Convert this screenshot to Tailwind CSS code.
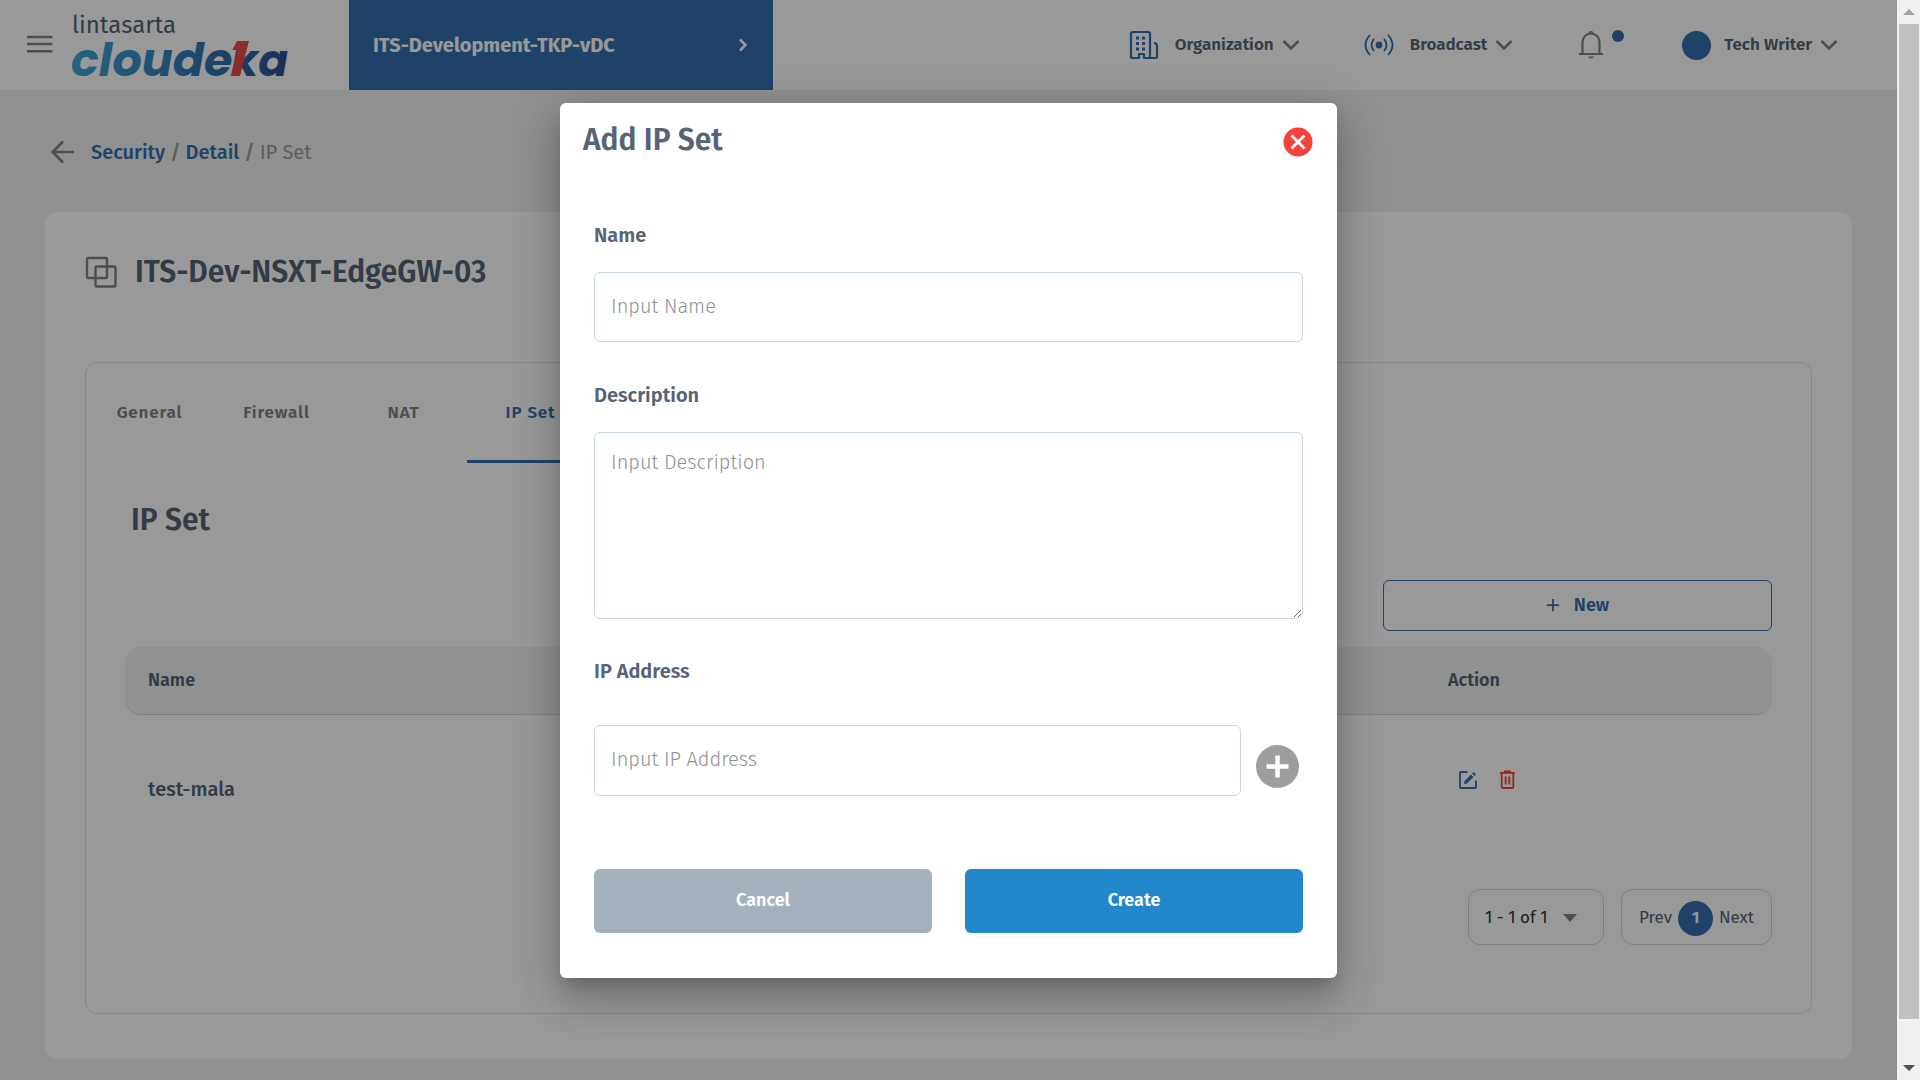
<!DOCTYPE html>
<html lang="en">
<head>
  <meta charset="UTF-8">
  <title>Add IP Set</title>
  <script src="https://cdn.jsdelivr.net/npm/@tailwindcss/browser@4"></script>
</head>
<body class="flex h-screen overflow-hidden bg-[#f0f0f0] font-['Fira_Sans','Noto_Sans',sans-serif] text-[#566476]">

  <div class="relative flex-1 min-w-0 overflow-hidden">

    <!-- Top bar -->
    <header class="flex items-center h-[90px] bg-white">
      <button aria-label="Menu" class="ml-6 w-8 h-8 text-[#828282]">
        <svg viewBox="0 0 32 32" class="w-8 h-8" stroke="currentColor" stroke-width="2.500"><path d="M3 8h25.500M3 15h25.500M3 22.300h25.500"/></svg>
      </button>
      <a href="#" aria-label="Lintasarta Cloudeka" class="ml-[17px] w-[214px]">
        <svg viewBox="0 0 214 90" class="w-[214px] h-[90px] overflow-visible">
          <defs>
            <linearGradient id="logoFill" gradientUnits="userSpaceOnUse" x1="0" y1="0" x2="212" y2="0">
              <stop offset="0" stop-color="#40a5d6"/>
              <stop offset=".3" stop-color="#378fc4"/>
              <stop offset=".7" stop-color="#3270ab"/>
              <stop offset="1" stop-color="#2c5094"/>
            </linearGradient>
          </defs>
          <text x="-1" y="33" font-size="24" fill="#566476" font-family="Fira Sans, Noto Sans">lintasarta</text>
          <text x="-2" y="76" font-size="46" font-weight="700" font-style="italic" fill="url(#logoFill)" font-family="Poppins, Montserrat, Open Sans">cloude</text>
          <text x="158" y="76" font-size="44" font-weight="700" font-style="italic" fill="url(#logoFill)" font-family="Poppins, Montserrat, Open Sans">ka</text>
          <path d="M157.700 76 164.700 50H159.300L164 41H176L167 76Z" fill="#ea4a48"/>
        </svg>
      </a>
      <button class="ml-[62px] flex items-center justify-between w-[424px] h-full pl-6 pr-6 bg-[#3570ad] text-white text-xl font-bold">
        ITS-Development-TKP-vDC
        <svg viewBox="0 0 12 16" class="w-3 h-4" fill="none" stroke="currentColor" stroke-width="2.500"><path d="M3 2.500 8.500 8 3 13.500"/></svg>
      </button>

      <nav class="ml-auto mr-[59px] flex items-center text-[17px] font-semibold">
        <button class="flex items-center">
          <svg viewBox="0 0 30 30" class="w-[30px] h-[30px] mr-4 text-[#3570ad]" fill="none" stroke="currentColor" stroke-width="2.200" stroke-linejoin="round">
            <path d="M2 28V4a2 2 0 0 1 2-2h15a2 2 0 0 1 2 2v24h-6v-4h-5v4H4a2 2 0 0 1-2-1M21 28h6a1 1 0 0 0 1-1V16q0-3-3-3"/>
            <path d="M7 8h3M13 8h3M7 13.500h3M13 13.500h3M7 19h3M13 19h3" stroke-width="3"/>
          </svg>
          Organization
          <svg viewBox="0 0 18 12" class="w-[18px] h-3 ml-2 text-[#828282]" fill="none" stroke="currentColor" stroke-width="2.500"><path d="m1.500 2 7.500 7.500L16.500 2"/></svg>
        </button>
        <button class="flex items-center ml-16">
          <svg viewBox="0 0 30 22" class="w-[30px] h-[22px] mr-4 text-[#3570ad]" fill="none" stroke="currentColor" stroke-width="1.800" stroke-linecap="round">
            <circle cx="15" cy="11" r="3.400" fill="currentColor" stroke="none"/>
            <path d="M9.500 5.500q-4 5.500 0 11M20.500 5.500q4 5.500 0 11M5.500 1.500q-8 9.500 0 19M24.500 1.500q8 9.500 0 19"/>
          </svg>
          Broadcast
          <svg viewBox="0 0 18 12" class="w-[18px] h-3 ml-2 text-[#828282]" fill="none" stroke="currentColor" stroke-width="2.500"><path d="m1.500 2 7.500 7.500L16.500 2"/></svg>
        </button>
        <button aria-label="Notifications" class="flex items-start ml-[65px]">
          <svg viewBox="0 0 26 30" class="w-[26px] h-[30px] text-[#828282]" fill="none" stroke="currentColor" stroke-width="2.200">
            <path d="M1 24h24M4.500 23V12a8.500 8.500 0 0 1 17 0v11"/>
            <path d="M10.500 3.500a2.500 2.500 0 0 1 5 0ZM10 26.500h6q-1 2-3 2t-3-2" fill="currentColor" stroke="none"/>
          </svg>
          <span class="w-3 h-3 ml-2 rounded-full bg-[#3570ad]"></span>
        </button>
        <button class="flex items-center ml-[58px]">
          <span class="w-[29px] h-[29px] mr-[13px] rounded-full bg-[#3570ad]"></span>
          Tech Writer
          <svg viewBox="0 0 18 12" class="w-[18px] h-3 ml-2 text-[#828282]" fill="none" stroke="currentColor" stroke-width="2.500"><path d="m1.500 2 7.500 7.500L16.500 2"/></svg>
        </button>
      </nav>
    </header>

    <main class="px-[45px] pt-12">
      <!-- Breadcrumb -->
      <nav class="flex items-center h-7 pl-1 text-xl font-medium text-[#3570ad]">
        <a href="#" aria-label="Back" class="mr-4 text-[#828282]">
          <svg viewBox="0 0 26 26" class="w-[26px] h-[26px]" fill="none" stroke="currentColor" stroke-width="2.500"><path d="M25 13H4M14 2.500 3.500 13 14 23.500"/></svg>
        </a>
        <a href="#">Security</a>
        <span class="mx-[5px] text-[#999]">/</span>
        <a href="#">Detail</a>
        <span class="mx-[5px] text-[#999]">/</span>
        <span class="font-normal text-[#999]">IP Set</span>
      </nav>

      <section class="mt-[46px] px-10 pt-10 pb-[45px] rounded-xl bg-white">
        <div class="flex items-center gap-[18px] h-10">
          <svg viewBox="0 0 32 32" class="w-8 h-8 text-[#828282]" fill="none" stroke="currentColor" stroke-width="2.400">
            <rect x="2" y="2" width="20" height="20" rx="1"/><rect x="10.500" y="10.500" width="20" height="20" rx="1"/>
          </svg>
          <h1 class="text-3xl font-semibold">ITS-Dev-NSXT-EdgeGW-03</h1>
        </div>

        <div class="mt-[70px] border border-[#dcdfe2] rounded-xl pb-[68px]">
          <!-- Tabs -->
          <div class="flex h-[100px] text-[17px] font-semibold tracking-wider text-[#828282]">
            <button class="w-[127px]">General</button>
            <button class="w-[127px]">Firewall</button>
            <button class="w-[127px]">NAT</button>
            <button class="w-[127px] border-y-3 border-t-transparent border-b-[#3570ad] text-[#3570ad]">IP Set</button>
          </div>

          <div class="px-[39px]">
            <h2 class="mt-[37px] pl-1.5 text-3xl leading-10 font-semibold">IP Set</h2>
            <div class="flex justify-end mt-10">
              <button class="flex items-center justify-center gap-3.5 w-[389px] h-[51px] pb-0.5 border border-[#3570ad] rounded-md text-lg font-semibold text-[#3570ad]">
                <svg viewBox="0 0 16 16" class="w-3.5 h-3.5" stroke="currentColor" stroke-width="2"><path d="M8 1v14M1 8h14"/></svg>
                New
              </button>
            </div>

            <table class="mt-4 w-full text-left border-separate border-spacing-0">
              <thead>
                <tr class="h-[68px] text-lg">
                  <th class="pl-[23px] pb-0.5 font-semibold bg-[#f0f4f2] border-b border-[#d6d6d6] rounded-l-2xl">Name</th>
                  <th class="w-[324px] pb-0.5 font-semibold bg-[#f0f4f2] border-b border-[#d6d6d6] rounded-r-2xl">Action</th>
                </tr>
              </thead>
              <tbody>
                <tr class="h-[148px]">
                  <td class="pl-[23px] text-xl font-medium">test-mala</td>
                  <td>
                    <div class="flex gap-5 pl-2.5 pb-[18px]">
                      <button aria-label="Edit">
                        <svg viewBox="0 0 20 20" class="w-5 h-5 text-[#3570ad]" fill="none" stroke="currentColor" stroke-width="1.800">
                          <path d="M9.500 2H3a1 1 0 0 0-1 1v14a1 1 0 0 0 1 1h14a1 1 0 0 0 1-1v-6.500"/>
                          <path d="m6 14 .5-3L13 4.500 15.500 7 9 13.500ZM14 3.500 15.500 2 18 4.500 16.500 6Z" fill="currentColor" stroke="none"/>
                        </svg>
                      </button>
                      <button aria-label="Delete">
                        <svg viewBox="0 0 20 20" class="w-5 h-5 text-[#f44336]" fill="none" stroke="currentColor" stroke-width="1.800">
                          <path d="M2 2.800h15M6 1.500h7M3.700 3v14a1 1 0 0 0 1 1h9.600a1 1 0 0 0 1-1V3M7.700 6.500v8M11.300 6.500v8"/>
                        </svg>
                      </button>
                    </div>
                  </td>
                </tr>
              </tbody>
            </table>

            <!-- Pagination -->
            <div class="flex justify-end gap-[17px] mt-[26px] text-[17px]">
              <button class="flex items-center justify-between w-[136px] h-14 pt-0.5 pl-4 pr-[26px] border border-[#d2d9e2] rounded-xl text-[#333]">
                1 - 1 of 1
                <svg viewBox="0 0 14 8" class="w-3.5 h-2" fill="#828282"><path d="M0 0h14L7 8z"/></svg>
              </button>
              <div class="flex items-center justify-between w-[151px] h-14 pt-0.5 px-[17px] border border-[#d2d9e2] rounded-xl">
                <a href="#">Prev</a>
                <a href="#" class="flex items-center justify-center w-[35px] h-[35px] rounded-full bg-[#3570ad] font-semibold text-white">1</a>
                <a href="#">Next</a>
              </div>
            </div>
          </div>
        </div>
      </section>
    </main>

    <!-- Modal -->
    <div class="absolute inset-0 flex items-center justify-center bg-black/40">
      <form role="dialog" aria-label="Add IP Set" class="w-[777px] pb-[45px] rounded-md bg-white shadow-[0_11px_15px_-7px_rgba(0,0,0,0.2),0_24px_38px_3px_rgba(0,0,0,0.14),0_9px_46px_8px_rgba(0,0,0,0.12)]">
        <div class="flex items-center justify-between h-[74px] px-[23px]">
          <h2 class="text-3xl font-semibold">Add IP Set</h2>
          <button type="button" aria-label="Close" class="pt-1">
            <svg viewBox="0 0 33 34" class="w-[33px] h-[34px]"><circle cx="17" cy="17" r="14.500" fill="#f44336"/><path d="m10.500 10.500 13 13M23.500 10.500l-13 13" stroke="#fff" stroke-width="2.800"/></svg>
          </button>
        </div>
        <div class="px-[34px] pt-[43px]">
          <label for="name" class="block text-xl leading-[30px] font-semibold">Name</label>
          <input id="name" type="text" placeholder="Input Name" class="block mt-[22px] w-full h-[70px] px-4 pb-0.5 border border-[#cbd7e4] rounded-md text-xl font-light placeholder:text-[#919191]">

          <label for="description" class="block mt-[38px] text-xl leading-[30px] font-semibold">Description</label>
          <textarea id="description" placeholder="Input Description" class="block mt-[22px] w-full h-[187px] px-4 py-[15px] border border-[#cbd7e4] rounded-md text-xl font-light placeholder:text-[#919191]"></textarea>

          <label for="ip" class="block mt-[37px] text-xl leading-[30px] font-semibold">IP Address</label>
          <div class="flex items-center mt-[39px] gap-[11px]">
            <input id="ip" type="text" placeholder="Input IP Address" class="flex-1 h-[71px] px-4 pb-0.5 border border-[#cbd7e4] rounded-md text-xl font-light placeholder:text-[#919191]">
            <button type="button" aria-label="Add IP address" class="pt-3">
              <svg viewBox="0 0 51 51" class="w-[51px] h-[51px]"><circle cx="25.500" cy="25.500" r="21.500" fill="#9e9e9e"/><path d="M25.500 14.500v22M14.500 25.500h22" stroke="#fff" stroke-width="4.500"/></svg>
            </button>
          </div>

          <div class="grid grid-cols-2 gap-[33px] mt-[73px] text-lg font-semibold text-white">
            <button type="button" class="h-16 pb-0.5 rounded-md bg-[#a5b2be]">Cancel</button>
            <button type="submit" class="h-16 pb-0.5 rounded-md bg-[#2388cb]">Create</button>
          </div>
        </div>
      </form>
    </div>
  </div>

  <!-- Scrollbar -->
  <div class="flex flex-col items-center w-[23px] bg-[#f1f1f1]">
    <div class="flex items-center justify-center h-6">
      <svg viewBox="0 0 12 6" class="w-3 h-1.5" fill="#a3a3a3"><path d="M6 0l6 6H0z"/></svg>
    </div>
    <div class="flex-1 w-5 bg-[#c1c1c1]"></div>
    <div class="flex items-end justify-center h-[61px] pb-[9px]">
      <svg viewBox="0 0 12 6" class="w-3 h-1.5" fill="#505050"><path d="M0 0h12L6 6z"/></svg>
    </div>
  </div>

</body>
</html>
